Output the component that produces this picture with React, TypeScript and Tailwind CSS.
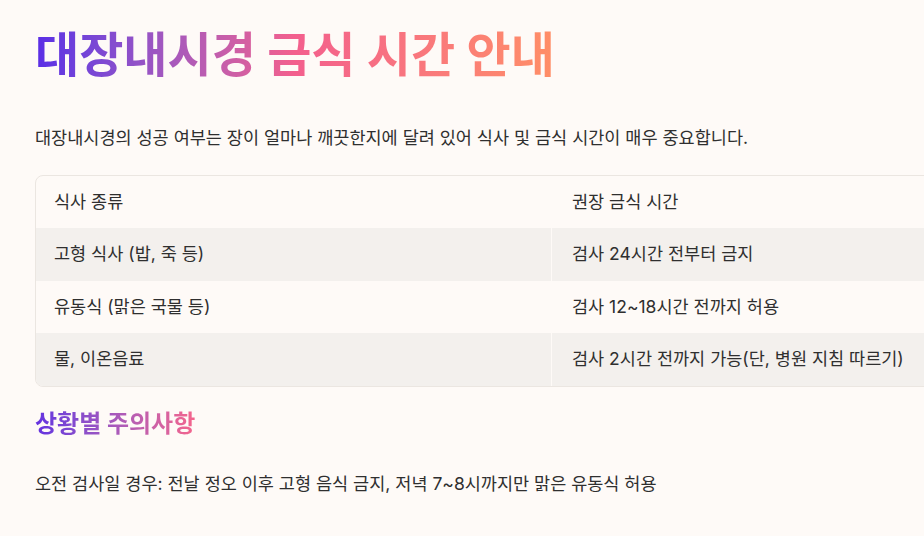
import React from 'react';

const rows: [string, string][] = [
  ['고형 식사 (밥, 죽 등)', '검사 24시간 전부터 금지'],
  ['유동식 (맑은 국물 등)', '검사 12~18시간 전까지 허용'],
  ['물, 이온음료', '검사 2시간 전까지 가능(단, 병원 지침 따르기)'],
];

export default function App() {
  return (
    <div
      className="min-h-[536px] w-full overflow-hidden bg-[#fefaf7] text-[#2f2f2f]"
      style={{ fontFamily: 'Inter, "Noto Sans CJK KR", sans-serif' }}
    >
      <div className="pl-[35px] pt-[22px]">
        <h1 className="inline-block bg-gradient-to-r from-[#5a2ce6] via-[#f35f8d] to-[#ff8e66] bg-clip-text text-[48px] font-bold leading-[66px] text-transparent">
          대장내시경 금식 시간 안내
        </h1>
        <p className="mt-[37px] text-[17.5px] leading-[26px]">
          대장내시경의 성공 여부는 장이 얼마나 깨끗한지에 달려 있어 식사 및 금식 시간이 매우 중요합니다.
        </p>
        <div className="mt-[24px] w-[1034px] overflow-hidden rounded-lg border border-[#ebe6e1]">
          <div className="grid grid-cols-2">
            <div className="flex h-[52px] items-center px-[18px] text-[17.5px]">식사 종류</div>
            <div className="flex h-[52px] items-center px-5 text-[17.5px]">권장 금식 시간</div>
          </div>
          {rows.map(([a, b], i) => (
            <div
              key={a}
              className={`grid grid-cols-2 ${i % 2 === 0 ? 'bg-[#f3f0ed]' : 'bg-[#fefaf7]'}`}
            >
              <div className="flex h-[52.5px] items-center border-r border-[#fefaf7] px-[18px] text-[17.5px]">{a}</div>
              <div className="flex h-[52.5px] items-center px-5 text-[17.5px]">{b}</div>
            </div>
          ))}
        </div>
        <h2 className="mt-[21px] inline-block bg-gradient-to-r from-[#6330e0] to-[#f4648c] bg-clip-text text-[24px] font-bold leading-8 text-transparent">
          상황별 주의사항
        </h2>
        <p className="mt-[31px] pb-10 text-[17.5px] leading-[26px]">
          오전 검사일 경우: 전날 정오 이후 고형 음식 금지, 저녁 7~8시까지만 맑은 유동식 허용
        </p>
      </div>
    </div>
  );
}
